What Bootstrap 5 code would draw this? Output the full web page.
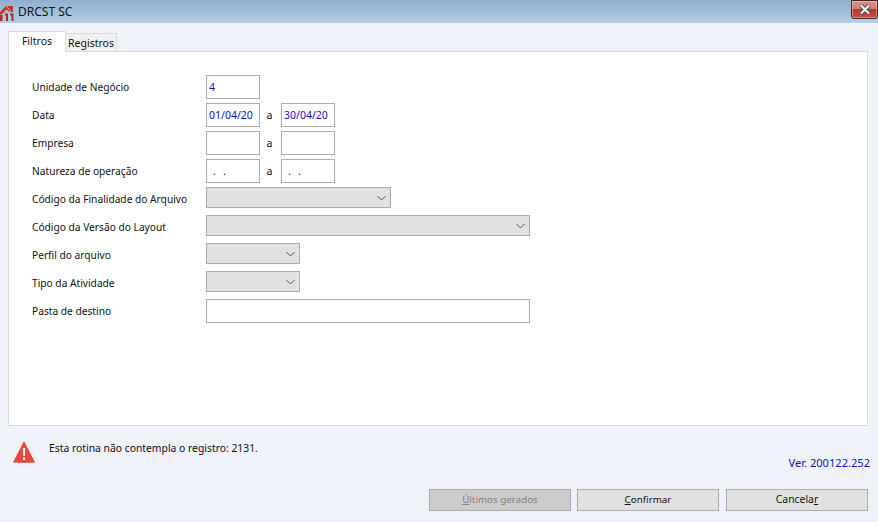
<!DOCTYPE html>
<html lang="pt">
<head>
<meta charset="utf-8">
<link href="https://cdn.jsdelivr.net/npm/bootstrap@5.3.0/dist/css/bootstrap.min.css" rel="stylesheet">
<style>
html,body{height:522px;overflow:hidden}
body{background:#f0f2f9;color:#111;font:10.2px/1 "Noto Sans",sans-serif;width:878px}
.titlebar{height:23px;background:linear-gradient(#90aecd,#b6cfe9)}
.titlebar-text{font-size:12px;color:#0c1420;margin-left:4px}
.closebtn{width:27px;height:19px;border:1px solid #4a2530;border-radius:0 0 3px 3px;background:linear-gradient(#d98f84 0,#cf8073 45%,#b8392a 50%,#c0503f 100%);box-shadow:inset 0 0 0 1px rgba(255,255,255,.35)}
.tabstrip{height:28px;padding:8px 8px 0;font-size:10.5px}
.tab-on{width:58px;height:21px;background:#fff;border:1px solid #d9d9d9;border-bottom:0;position:relative;z-index:1;padding-top:4px;text-align:center}
.tab-off{width:51px;height:18px;margin-top:2px;background:#f0f0f0;border:1px solid #d9d9d9;border-left:0;border-bottom:0;padding-top:4px;text-align:center}
.panel{margin:0 10px 0 8px;height:375px;background:#fff;border:1px solid #d9d9d9;padding:23px 0 0 23px}
.frow{height:28px;align-items:flex-start}
.flabel{width:174px;padding-top:7px}
.box{width:54px;height:24px;border:1px solid #adadad;background:#fff;color:#1010c8;padding:6px 0 0 2px;line-height:11px;font-size:10.5px}
.dots{padding-left:4px;word-spacing:4.5px}
.sep{width:21px;text-align:center;padding:7px 2px 0 0;font-size:10.5px}
.combo{height:21px;border:1px solid #adadad;background:#e1e1e1;padding-right:4px}
.w185{width:185px}.w324{width:324px}.w94{width:94px}
.statusline{height:44px;padding:15px 8px 0 13px}
.msg{margin-left:14px;padding-top:2px;font-size:10.35px}
.ver{color:#1010c8;text-align:right;padding:0 8px 0 0;height:32px;margin-top:-13px;font-size:11.1px}
.actions{padding-right:10px}
.actbtn{width:142px;height:22px;border:1px solid #adadad;background:#e1e1e1;color:#111;font-size:9.8px;padding:0;border-radius:0;margin-left:6px}
.actbtn:last-child{margin-left:7px;font-size:10.4px}
.actbtn:disabled{background:#cbcbcb;color:#808080;opacity:1;border-color:#adadad}
</style>
</head>
<body>
<div class="titlebar d-flex align-items-center">
<svg width="14" height="18" viewBox="0 0 14 18" class="flex-shrink-0"><path d="M0 9 6 3h7v6H9.500L6.500 6.500 1.500 11.500H0z" fill="#bf3329"/><path d="M6.500 3 11 9" stroke="#e9a9a0" fill="none"/><path d="M0 12h2.500v6H0zM5 10.500h3V18H6v-5.500H5zM10 10.500h3.500V18h-2v-5.500H10z" fill="#ad2a22"/></svg>
<span class="titlebar-text">DRCST SC</span>
<div class="closebtn ms-auto align-self-start d-flex align-items-center justify-content-center">
<svg width="14" height="11" viewBox="0 0 14 11"><path d="M3 1.500l8 8M11 1.500l-8 8" stroke="#44495c" stroke-width="4" fill="none"/><path d="M3 1.500l8 8M11 1.500l-8 8" stroke="#f4f4f4" stroke-width="2.200" fill="none"/></svg>
</div>
</div>
<div class="tabstrip d-flex">
<div class="tab-on">Filtros</div>
<div class="tab-off">Registros</div>
</div>
<div class="panel">
<div class="frow d-flex"><div class="flabel">Unidade de Negócio</div><div class="box">4</div></div>
<div class="frow d-flex"><div class="flabel">Data</div><div class="box">01/04/20</div><div class="sep">a</div><div class="box">30/04/20</div></div>
<div class="frow d-flex"><div class="flabel">Empresa</div><div class="box"></div><div class="sep">a</div><div class="box"></div></div>
<div class="frow d-flex"><div class="flabel">Natureza de operação</div><div class="box"><span class="dots">. .</span></div><div class="sep">a</div><div class="box"><span class="dots">. .</span></div></div>
<div class="frow d-flex"><div class="flabel">Código da Finalidade do Arquivo</div><div class="combo w185 d-flex align-items-center justify-content-end"><svg width="9" height="6" viewBox="0 0 9 6"><path d="M.5 1l4 4 4-4" stroke="#555" fill="none"/></svg></div></div>
<div class="frow d-flex"><div class="flabel">Código da Versão do Layout</div><div class="combo w324 d-flex align-items-center justify-content-end"><svg width="9" height="6" viewBox="0 0 9 6"><path d="M.5 1l4 4 4-4" stroke="#555" fill="none"/></svg></div></div>
<div class="frow d-flex"><div class="flabel">Perfil do arquivo</div><div class="combo w94 d-flex align-items-center justify-content-end"><svg width="9" height="6" viewBox="0 0 9 6"><path d="M.5 1l4 4 4-4" stroke="#555" fill="none"/></svg></div></div>
<div class="frow d-flex"><div class="flabel">Tipo da Atividade</div><div class="combo w94 d-flex align-items-center justify-content-end"><svg width="9" height="6" viewBox="0 0 9 6"><path d="M.5 1l4 4 4-4" stroke="#555" fill="none"/></svg></div></div>
<div class="frow d-flex"><div class="flabel">Pasta de destino</div><div class="box w324"></div></div>
</div>
<div class="statusline d-flex">
<svg width="22" height="22" viewBox="0 0 22 22"><path d="M11 1.500 21 21H1z" fill="#e8493c" stroke="#e8493c" stroke-width="1.500" stroke-linejoin="round"/><path d="M9.800 7h2.400l-.4 8h-1.600z" fill="#fff"/><rect x="10" y="16.500" width="2" height="2.500" fill="#fff"/></svg>
<div class="msg">Esta rotina não contempla o registro: 2131.</div>
</div>
<div class="ver">Ver. 200122.252</div>
<div class="actions d-flex justify-content-end">
<button type="button" class="btn actbtn" disabled><u>Ú</u>ltimos gerados</button>
<button type="button" class="btn actbtn"><u>C</u>onfirmar</button>
<button type="button" class="btn actbtn">Cancela<u>r</u></button>
</div>
</body>
</html>
